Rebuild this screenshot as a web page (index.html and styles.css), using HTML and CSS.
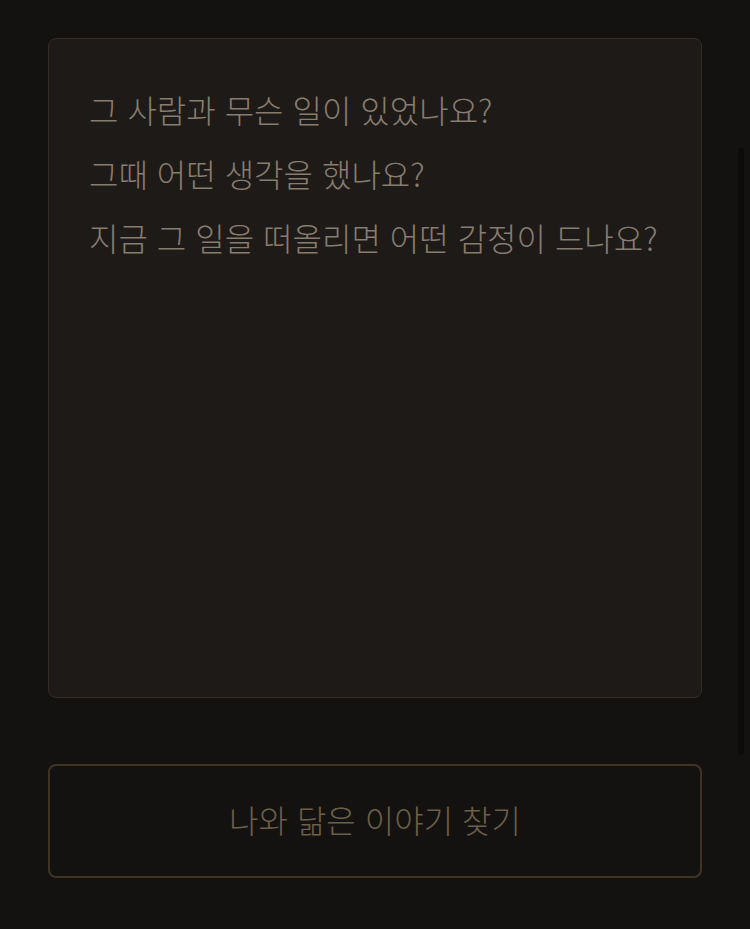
FILE: index.html
```html
<!DOCTYPE html>
<html lang="ko">
<head>
  <meta charset="UTF-8">
  <meta name="viewport" content="width=device-width, initial-scale=1.0">
  <title>나와 닮은 이야기</title>
  <link rel="stylesheet" href="styles.css">
</head>
<body>
  <div class="page">
    <div class="story-box">
      <p>그 사람과 무슨 일이 있었나요?</p>
      <p>그때 어떤 생각을 했나요?</p>
      <p>지금 그 일을 떠올리면 어떤 감정이 드나요?</p>
    </div>
    <button type="button" class="btn">나와 닮은 이야기 찾기</button>
  </div>
  <div class="scroll-thumb"></div>
</body>
</html>
```

FILE: styles.css
```css
body {
  margin: 0;
  background-color: #141211;
  font-family: "Noto Sans CJK KR", "Noto Sans", sans-serif;
  height: 929px;
  overflow: hidden;
}
.page {
  padding: 38px 48px 0;
  display: flex;
  flex-direction: column;
  gap: 66px;
}
.story-box {
  box-sizing: border-box;
  height: 660px;
  background: #1e1a18;
  border: 1px solid #342d24;
  border-radius: 8px;
  padding: 38px 40px;
}
.story-box p {
  margin: 0;
  font-size: 32px;
  line-height: 64px;
  font-weight: 200;
  color: #877c6e;
}
.btn {
  box-sizing: border-box;
  height: 114px;
  width: 100%;
  padding: 0 0 4px;
  background: transparent;
  border: 2px solid #3d3424;
  border-radius: 8px;
  font-family: inherit;
  font-size: 32px;
  font-weight: 200;
  color: #6c5f48;
  cursor: pointer;
}
.scroll-thumb {
  position: absolute;
  left: 738px;
  top: 148px;
  width: 6px;
  height: 607px;
  border-radius: 3px;
  background: #0c0b0a;
}
```
